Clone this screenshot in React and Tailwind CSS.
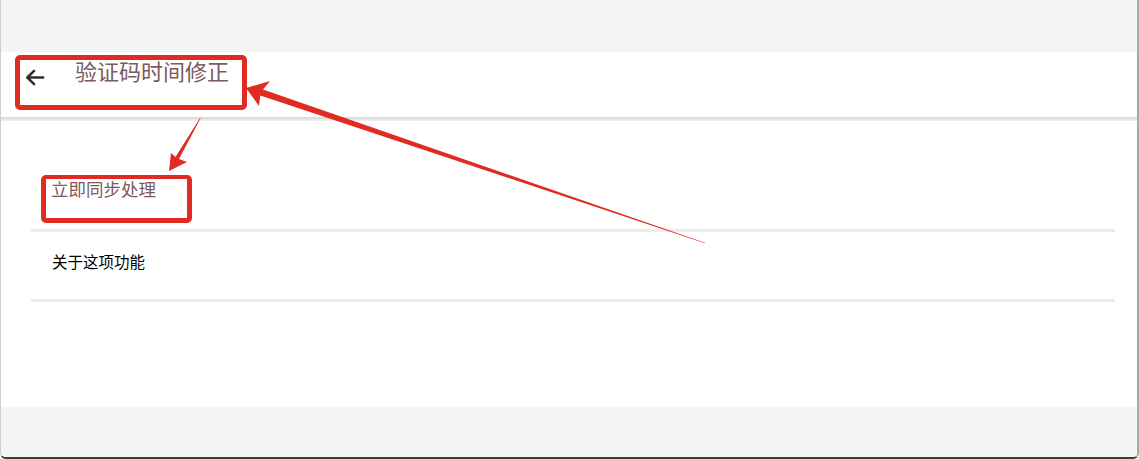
import React from "react";

const cjk = { fontFamily: '"Noto Sans CJK SC", "Noto Sans", sans-serif' };

export default function App() {
  return (
    <div className="relative w-[1139px] h-[459px] overflow-hidden bg-white" style={cjk}>
      <div className="flex flex-col h-full border-r-2 border-b-2 border-r-[#a8a8a8] border-b-[#3a3a3a] rounded-bl-[6px] rounded-br-[6px] overflow-hidden border-l border-l-[#cfcfcf]">
        <div className="h-[52px] bg-[#f5f5f5] shrink-0" />
        <div className="h-[65px] shrink-0 bg-white flex items-start pt-[3px]">
          <div className="w-[74px] flex justify-start pl-[23px] pt-[11px]">
            <svg width="23" height="23" viewBox="0 0 24 24" fill="none" stroke="#2e2e2e" strokeWidth="2.6" strokeLinecap="round" strokeLinejoin="round">
              <path d="M20 12H4" />
              <path d="M10.5 5l-7 7 7 7" />
            </svg>
          </div>
          <div className="text-[22px] leading-[30px] text-[#7a5a5e]">验证码时间修正</div>
        </div>
        <div className="h-[4px] shrink-0 bg-gradient-to-b from-[#d6d6d6] to-[#f0f0f0]" />
        <div className="flex-1 bg-white pl-[30px] pr-[22px] pt-[54px]">
          <div className="h-[57px] pl-[20px] pt-[2px] text-[17.5px] leading-[24px] text-[#7a5a5e] border-b-[3px] border-[#ececec]">立即同步处理</div>
          <div className="h-[70px] pl-[21px] pt-[18px] text-[15.5px] leading-[22px] text-black border-b-[3px] border-[#ececec]">关于这项功能</div>
        </div>
        <div className="h-[50px] shrink-0 bg-[#f5f5f5]" />
      </div>

      {/* annotations */}
      <div className="absolute left-[15px] top-[55px] w-[232px] h-[55px] border-[5px] border-[#df2b22] rounded-[5px]" />
      <div className="absolute left-[41px] top-[175px] w-[151px] h-[48px] border-[5px] border-t-[4px] border-[#df2b22] rounded-[5px]" />
      <svg className="absolute left-0 top-0 pointer-events-none" width="1139" height="459">
        <polygon
          fill="#e02b22"
          points="246,88 270,81 263,89.6 705,242.8 705,243.3 260.3,95.6 259,106"
        />
        <polygon
          fill="#e02b22"
          points="169,171 171,153 175.5,157 200,118 200.6,118.3 179,159 187,162"
        />
      </svg>
    </div>
  );
}
